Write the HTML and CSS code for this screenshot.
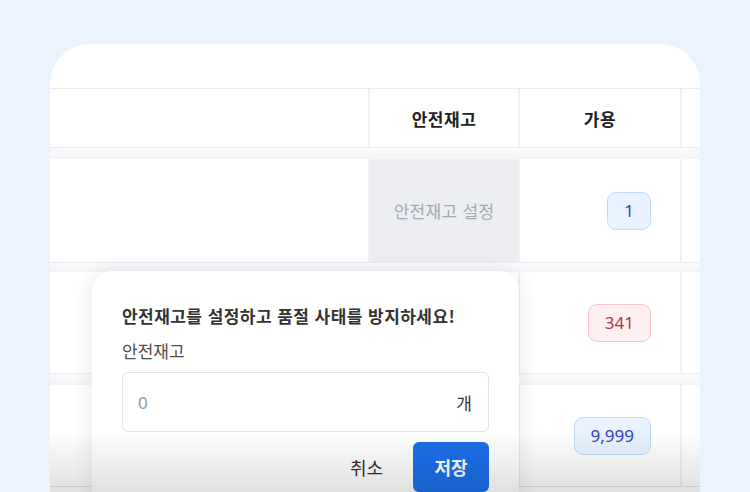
FILE: index.html
```html
<!DOCTYPE html>
<html lang="ko">
<head>
<meta charset="utf-8">
<link rel="stylesheet" href="styles.css">
</head>
<body>
<div class="card">
  <div class="card-head"></div>
  <div class="row header">
    <div class="cell c1"></div>
    <div class="cell c2 th">안전재고</div>
    <div class="cell c3 th center">가용</div>
    <div class="cell c4"></div>
  </div>
  <div class="band b12"></div>
  <div class="row r1">
    <div class="cell c1"></div>
    <div class="cell c2 muted">안전재고 설정</div>
    <div class="cell c3 num"><span class="badge blue">1</span></div>
    <div class="cell c4"></div>
  </div>
  <div class="band b10"></div>
  <div class="row r2">
    <div class="cell c1"></div>
    <div class="cell c2"></div>
    <div class="cell c3 num"><span class="badge red">341</span></div>
    <div class="cell c4"></div>
  </div>
  <div class="band b12"></div>
  <div class="row r3">
    <div class="cell c1"></div>
    <div class="cell c2"></div>
    <div class="cell c3 num"><span class="badge blue">9,999</span></div>
    <div class="cell c4"></div>
  </div>

  <div class="popover">
    <div class="pop-title">안전재고를 설정하고 품절 사태를 방지하세요!</div>
    <div class="pop-label">안전재고</div>
    <div class="pop-input">
      <span class="placeholder">0</span>
      <span class="unit">개</span>
    </div>
    <div class="pop-actions">
      <span class="btn-cancel">취소</span>
      <span class="btn-save">저장</span>
    </div>
  </div>

  <div class="fade"></div>
</div>
</body>
</html>
```

FILE: styles.css
```css
* { box-sizing: border-box; }
html, body {
  margin: 0;
  padding: 0;
}
body {
  width: 750px;
  height: 492px;
  overflow: hidden;
  background: #ebf3fe;
  font-family: "Noto Sans CJK KR", "Noto Sans", sans-serif;
  color: #222;
}
.card {
  position: relative;
  margin: 44px 0 0 50px;
  width: 650px;
  height: 448px;
  background: #fff;
  border-radius: 40px 40px 0 0;
  overflow: hidden;
}
.card-head { height: 44px; }
.row {
  display: grid;
  grid-template-columns: 320px 150px 162px 18px;
}
.row.header {
  height: 59px;
  border-top: 1px solid #ebecf0;
}
.r1 { height: 103px; }
.r2 { height: 101px; }
.r3 { height: 102px; border-bottom: 1px solid #e6e7ea; }
.cell {
  border-right: 2px solid #f0f1f4;
  display: flex;
  align-items: center;
}
.cell.c4 { border-right: none; }
.th {
  justify-content: center;
  font-size: 17px;
  font-weight: 700;
  letter-spacing: 0.5px;
  color: #222;
}
.muted {
  justify-content: center;
  background: #eceef2;
  color: #a2aab5;
  font-size: 17px;
  letter-spacing: 0.3px;
}
.num {
  justify-content: flex-end;
  padding-right: 29px;
}
.band {
  background: linear-gradient(#fbfbfc, #f3f4f7);
  border-top: 1px solid #ebecf0;
}
.b12 { height: 12px; }
.b10 { height: 10px; }
.badge {
  display: inline-flex;
  align-items: center;
  height: 38px;
  padding: 0 16px;
  border-radius: 9px;
  font-family: "Noto Sans", sans-serif;
  font-size: 17px;
}
.badge.blue {
  background: #e8f3ff;
  border: 1px solid #bddcfb;
  color: #3340c8;
}
.badge.red {
  background: #feeff0;
  border: 1px solid #f8c6cb;
  color: #ae3545;
}
.popover {
  position: absolute;
  left: 42px;
  top: 227px;
  width: 427px;
  height: 260px;
  background: #fff;
  border-radius: 20px;
  box-shadow: 0 2px 20px rgba(40, 50, 80, 0.12);
  padding: 32px 30px 0 30px;
}
.pop-title {
  font-size: 17px;
  font-weight: 600;
  color: #333;
  line-height: 26px;
  letter-spacing: 0.45px;
}
.pop-label {
  margin-top: 9px;
  font-size: 17px;
  color: #4d4d4d;
  line-height: 26px;
}
.pop-input {
  margin-top: 8px;
  height: 60px;
  border: 1px solid #dfe3e8;
  border-radius: 6px;
  display: flex;
  align-items: center;
  justify-content: space-between;
  padding: 0 16px 0 15px;
}
.placeholder {
  font-family: "Noto Sans", sans-serif;
  font-size: 17px;
  color: #8c9bab;
}
.unit {
  font-size: 17px;
  color: #333;
}
.pop-actions {
  margin-top: 10px;
  display: flex;
  justify-content: flex-end;
  align-items: center;
  gap: 30px;
}
.btn-cancel {
  font-size: 18px;
  color: #333;
}
.btn-save {
  width: 76px;
  height: 50px;
  border-radius: 6px;
  background: #1c6fe9;
  color: #fff;
  font-size: 18px;
  font-weight: 700;
  display: flex;
  align-items: center;
  justify-content: center;
}
.fade {
  position: absolute;
  left: 0;
  right: 0;
  top: 386px;
  bottom: 0;
  background: linear-gradient(rgba(0,0,0,0), rgba(0,0,0,0.12));
  pointer-events: none;
}
```
